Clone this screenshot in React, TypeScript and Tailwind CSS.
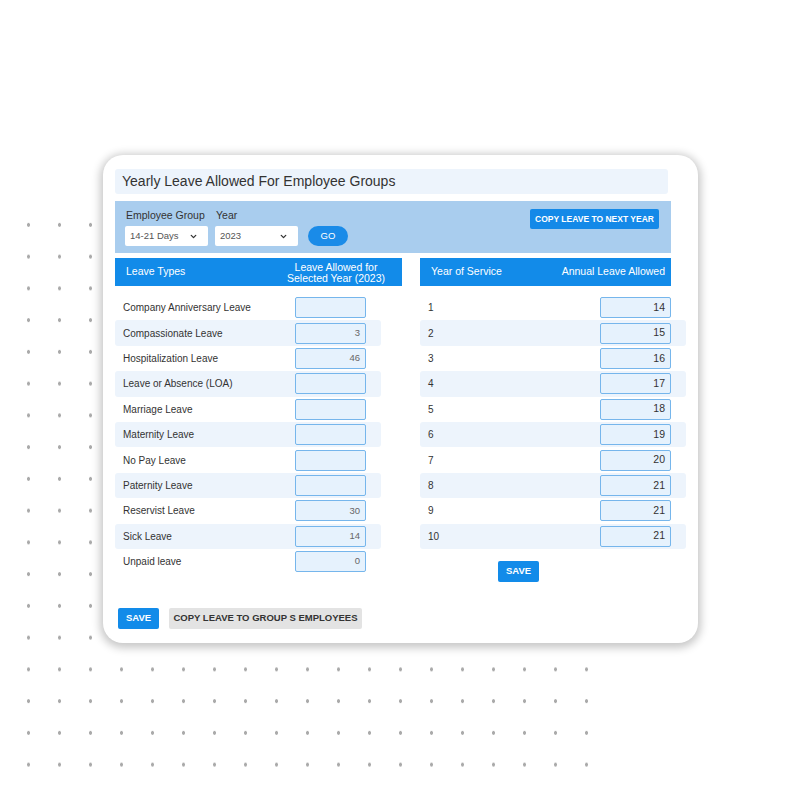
import { ChevronDown } from 'lucide-react';

const leaveTypes = [
  { name: 'Company Anniversary Leave', value: '' },
  { name: 'Compassionate Leave', value: '3' },
  { name: 'Hospitalization Leave', value: '46' },
  { name: 'Leave or Absence (LOA)', value: '' },
  { name: 'Marriage Leave', value: '' },
  { name: 'Maternity Leave', value: '' },
  { name: 'No Pay Leave', value: '' },
  { name: 'Paternity Leave', value: '' },
  { name: 'Reservist Leave', value: '30' },
  { name: 'Sick Leave', value: '14' },
  { name: 'Unpaid leave', value: '0' },
];

const serviceYears = [
  { year: '1', value: '14' },
  { year: '2', value: '15' },
  { year: '3', value: '16' },
  { year: '4', value: '17' },
  { year: '5', value: '18' },
  { year: '6', value: '19' },
  { year: '7', value: '20' },
  { year: '8', value: '21' },
  { year: '9', value: '21' },
  { year: '10', value: '21' },
];

function Select({ label }: { label: string }) {
  return (
    <div className="w-[83px] h-[20px] bg-white rounded-[2px] flex items-center justify-between pl-[5px] pr-[10px] text-[9.5px] text-[#555]">
      <span>{label}</span>
      <ChevronDown size={9} strokeWidth={3.5} className="text-[#333]" />
    </div>
  );
}

function Row({ label, value, striped, dark }: { label: string; value: string; striped: boolean; dark?: boolean }) {
  return (
    <div className={`w-[266px] h-[25.4px] flex items-center rounded-[3px] ${striped ? 'bg-[#edf4fc]' : ''}`}>
      <span className="w-[180px] pl-[8px] text-[10px] text-[#333]">{label}</span>
      <div
        className={`w-[71px] h-[21px] bg-[#e6f2fd] border-[1.5px] border-[#76b6ec] rounded-[2px] flex items-center justify-end pr-[5px] ${
          dark ? 'text-[10.5px] text-[#333]' : 'text-[9.5px] text-[#666]'
        }`}
      >
        {value}
      </div>
    </div>
  );
}

export default function App() {
  return (
    <div className="relative w-[800px] h-[799px] bg-white overflow-hidden font-['Liberation_Sans',Arial,sans-serif]">
      <div className="absolute left-[12.5px] top-[209px] w-[589px] h-[572px] bg-[radial-gradient(circle,#aaaaaa_1.5px,transparent_2px)] bg-[length:31px_31.75px]" />

      <div className="relative ml-[103px] mt-[155px] w-[595px] h-[488px] bg-white rounded-[20px] shadow-[0_2px_9px_3px_rgba(0,0,0,0.22)] pl-[12px] pt-[14px] inline-block align-top">
        <div className="w-[553px] h-[25px] bg-[#edf4fc] rounded-[3px] pl-[7px] text-[14px] leading-[25px] text-[#333]">
          Yearly Leave Allowed For Employee Groups
        </div>

        <div className="mt-[7px] w-[556px] h-[52px] bg-[#a9cdee] flex justify-between pl-[10px] pr-[12px] pt-[8px]">
          <div className="flex items-end gap-[7px] pb-[7px]">
            <div className="flex flex-col gap-[4px]">
              <span className="pl-[1px] text-[10.5px] leading-[13px] text-[#333]">Employee Group</span>
              <Select label="14-21 Days" />
            </div>
            <div className="flex flex-col gap-[4px]">
              <span className="pl-[1px] text-[10.5px] leading-[13px] text-[#333]">Year</span>
              <Select label="2023" />
            </div>
            <button className="ml-[3px] w-[40px] h-[20px] rounded-full bg-[#1a8be8] text-white text-[9.5px]">GO</button>
          </div>
          <button className="w-[129px] h-[20px] rounded-[2px] bg-[#1489e8] text-white text-[8.5px] font-bold self-start">
            COPY LEAVE TO NEXT YEAR
          </button>
        </div>

        <div className="mt-[5px] flex gap-[18px] items-start">
          <div className="flex flex-col">
            <div className="w-[287px] h-[28px] bg-[#128be9] flex items-center text-white text-[10.5px]">
              <span className="w-[155px] pl-[11px]">Leave Types</span>
              <span className="flex-1 text-center leading-[11px] pt-[1px]">
                Leave Allowed for
                <br />
                Selected Year (2023)
              </span>
            </div>
            <div className="mt-[9px] flex flex-col">
              {leaveTypes.map((l, i) => (
                <Row key={l.name} label={l.name} value={l.value} striped={i % 2 === 1} />
              ))}
            </div>
          </div>

          <div className="flex flex-col">
            <div className="w-[251px] h-[28px] bg-[#128be9] flex items-center justify-between pl-[11px] pr-[6px] text-white text-[10.5px]">
              <span>Year of Service</span>
              <span>Annual Leave Allowed</span>
            </div>
            <div className="mt-[9px] flex flex-col">
              {serviceYears.map((s, i) => (
                <Row key={s.year} label={s.year} value={s.value} striped={i % 2 === 1} dark />
              ))}
            </div>
            <button className="mt-[12px] ml-[78px] w-[41px] h-[21px] rounded-[2px] bg-[#128be9] text-white text-[9.5px] font-bold">
              SAVE
            </button>
          </div>
        </div>

        <div className="mt-[26px] ml-[3px] flex gap-[10px]">
          <button className="w-[41px] h-[21px] rounded-[2px] bg-[#128be9] text-white text-[9.5px] font-bold">SAVE</button>
          <button className="w-[193px] h-[21px] rounded-[2px] bg-[#e3e3e3] text-[#333] text-[9.5px] font-bold">
            COPY LEAVE TO GROUP S EMPLOYEES
          </button>
        </div>
      </div>
    </div>
  );
}
